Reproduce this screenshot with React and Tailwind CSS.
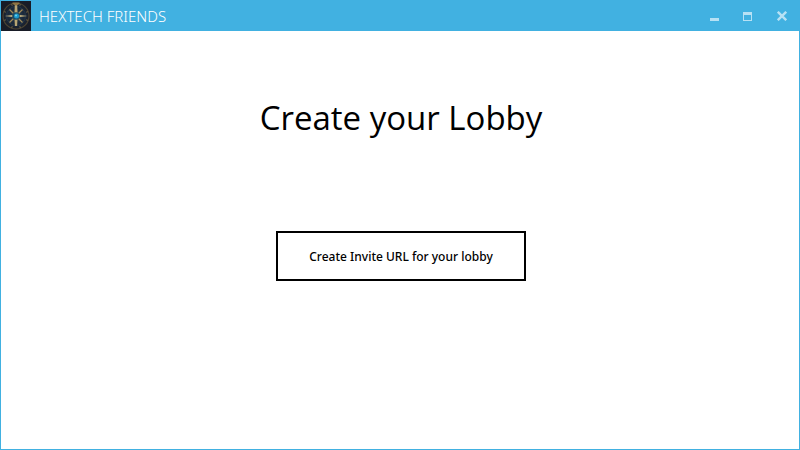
function CompassIcon() {
  const rim = [20, 70, 110, 160, 200, 250, 290, 340];
  return (
    <svg viewBox="0 0 30 30" className="size-[30px] shrink-0" aria-hidden="true">
      <defs>
        <radialGradient id="dial">
          <stop offset="0" stopColor="#2d4a5c" />
          <stop offset="0.55" stopColor="#1b2a3c" />
          <stop offset="1" stopColor="#1a1f2b" />
        </radialGradient>
      </defs>
      <rect width="30" height="30" fill="#181c27" />
      <circle cx="15" cy="15" r="13" fill="url(#dial)" stroke="#4b4433" strokeWidth="1.2" />
      <circle cx="15" cy="15" r="9.5" fill="none" stroke="#24384a" strokeWidth="1" />
      {rim.map((a) => (
        <path key={a} d="M15 2.2v2" stroke="#6d6144" strokeWidth="1" transform={`rotate(${a} 15 15)`} />
      ))}
      <path d="M8.500 8.500l13 13M21.500 8.500l-13 13" stroke="#a08a58" strokeWidth="1.300" />
      <path d="M3.500 15L13 13.800h4L26.500 15 17 16.200h-4z" fill="#c4b280" />
      <path d="M13.800 3h2.400l.6 12-.7 10h-2.200l-.7-10z" fill="#a3905f" />
      <path d="M15 5v20" stroke="#d6c797" strokeWidth="0.8" />
      <path d="M11.500 1.500h7v1.500l-2 1h-3l-2-1z" fill="#8d7444" />
      <circle cx="15" cy="15" r="3.800" fill="#1d4b63" />
      <circle cx="15.500" cy="15" r="2.500" fill="#1a98cc" />
      <circle cx="15" cy="14.500" r="1" fill="#6fd6ee" />
    </svg>
  );
}

const windowButton = "flex h-[30px] w-[34px] items-center justify-center";

function TitleBar() {
  return (
    <header className="flex h-[30px] items-center bg-[#41b1e1] text-white">
      <CompassIcon />
      <h1 className="ml-2 font-['Noto_Sans','Open_Sans',sans-serif] text-[15px] font-light leading-5">
        HEXTECH FRIENDS
      </h1>
      <div className="ml-auto flex text-[#b7e1f4]">
        <button type="button" aria-label="Minimize" className={windowButton}>
          <svg viewBox="0 0 10 10" className="size-[10px]" shapeRendering="crispEdges">
            <path d="M1 7h9v3H1z" fill="currentColor" />
          </svg>
        </button>
        <button type="button" aria-label="Maximize" className={windowButton}>
          <svg viewBox="0 0 10 10" className="size-[10px]" shapeRendering="crispEdges">
            <path d="M0 1h9v9H0zM1 4v5h7V4z" fill="currentColor" fillRule="evenodd" />
          </svg>
        </button>
        <button type="button" aria-label="Close" className={windowButton}>
          <svg viewBox="0 0 10 10" className="size-[10px]">
            <path d="M.8.8l8.400 8.400M9.200.8L.8 9.200" stroke="currentColor" strokeWidth="2.400" />
          </svg>
        </button>
      </div>
    </header>
  );
}

export default function App() {
  return (
    <div className="flex min-h-screen flex-col border border-[#41b1e1] bg-white text-black">
      <TitleBar />
      <main className="flex flex-1 flex-col items-center pl-0.5 pt-[63px]">
        <h2 className="font-['Open_Sans','Noto_Sans',sans-serif] text-[33px] leading-[48px]">
          Create your Lobby
        </h2>
        <button
          type="button"
          className="mt-[89px] h-[50px] w-[250px] border-2 border-black bg-white pt-0.5 font-['Noto_Sans','Open_Sans',sans-serif] text-[12px] font-medium"
        >
          Create Invite URL for your lobby
        </button>
      </main>
    </div>
  );
}
